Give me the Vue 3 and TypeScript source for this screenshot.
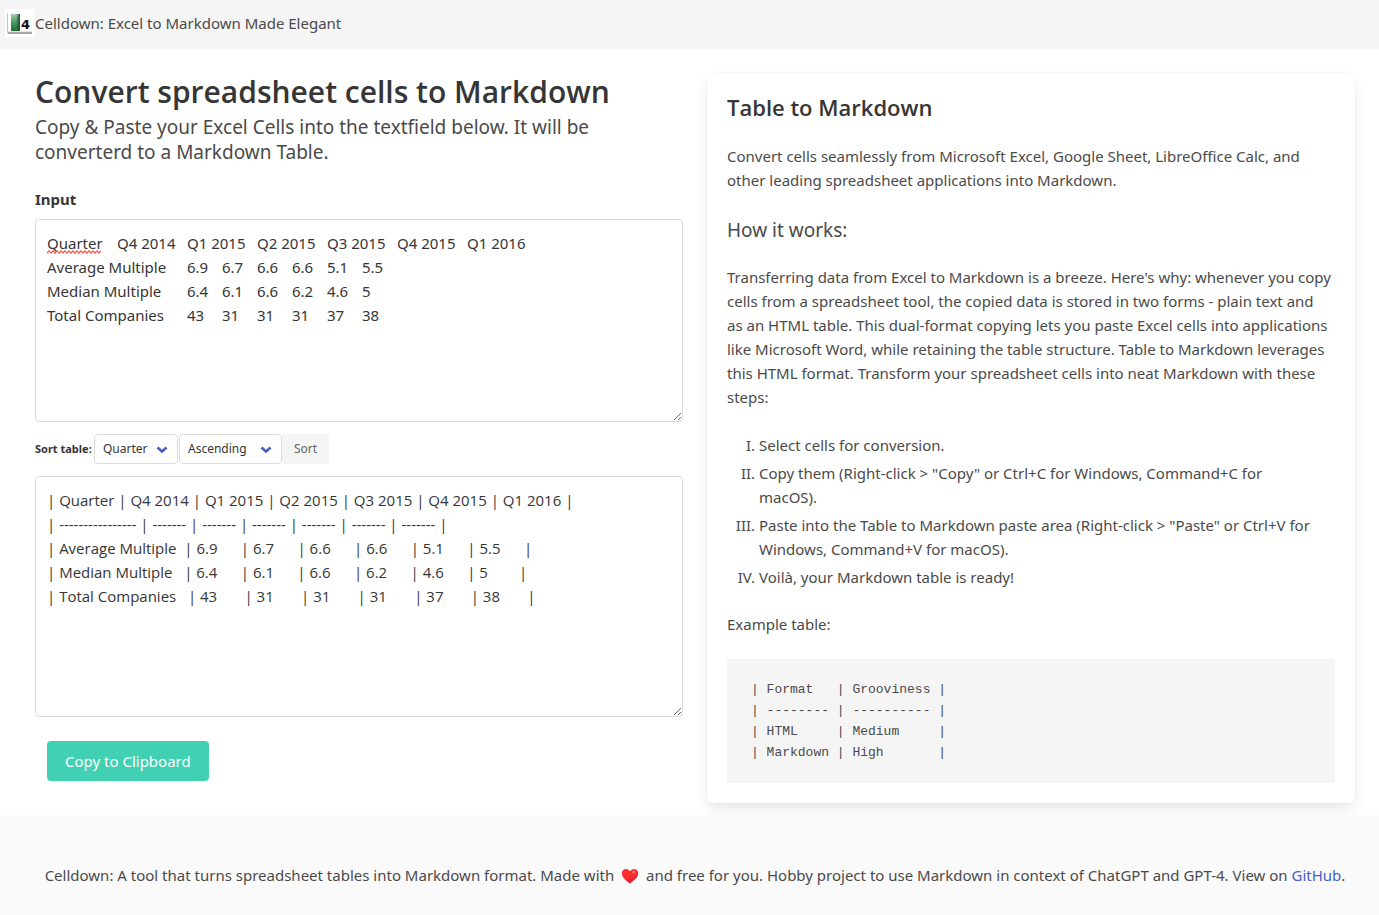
<script setup lang="ts">
import { ref } from 'vue'

const input = ref(
  [
    'Quarter\tQ4 2014\tQ1 2015\tQ2 2015\tQ3 2015\tQ4 2015\tQ1 2016',
    'Average Multiple\t6.9\t6.7\t6.6\t6.6\t5.1\t5.5',
    'Median Multiple\t6.4\t6.1\t6.6\t6.2\t4.6\t5',
    'Total Companies\t43\t31\t31\t31\t37\t38',
  ].join('\n'),
)

const output = ref(
  [
    '| Quarter | Q4 2014 | Q1 2015 | Q2 2015 | Q3 2015 | Q4 2015 | Q1 2016 |',
    '| ---------------- | ------- | ------- | ------- | ------- | ------- | ------- |',
    '| Average Multiple  | 6.9      | 6.7      | 6.6      | 6.6      | 5.1      | 5.5      |',
    '| Median Multiple   | 6.4      | 6.1      | 6.6      | 6.2      | 4.6      | 5        |',
    '| Total Companies   | 43       | 31       | 31       | 31       | 37       | 38       |',
  ].join('\n'),
)

const example = [
  '| Format   | Grooviness |',
  '| -------- | ---------- |',
  '| HTML     | Medium     |',
  '| Markdown | High       |',
].join('\n')

const columns = ['Quarter', 'Q4 2014', 'Q1 2015', 'Q2 2015', 'Q3 2015', 'Q4 2015', 'Q1 2016']
const sortColumn = ref('Quarter')
const sortOrder = ref('Ascending')

function copyOutput() {
  navigator.clipboard?.writeText(output.value)
}
</script>

<template>
  <div class="page">
    <header class="navbar">
      <svg class="logo" viewBox="0 0 30 28" aria-hidden="true">
        <defs>
          <linearGradient id="sheet" x1="0" x2="0" y1="0" y2="1">
            <stop offset="0" stop-color="#a3d0b0" />
            <stop offset="0.5" stop-color="#4c9a64" />
            <stop offset="1" stop-color="#1f6a34" />
          </linearGradient>
          <linearGradient id="edge" x1="0" x2="1">
            <stop offset="0" stop-color="#2a5636" stop-opacity="0" />
            <stop offset="1" stop-color="#16301d" />
          </linearGradient>
        </defs>
        <rect width="30" height="28" fill="#fff" />
        <rect x="2" y="4" width="1" height="20" fill="#c4c4c4" />
        <rect x="3" y="23" width="24" height="2" fill="#a9a9a9" />
        <rect x="3" y="22" width="24" height="1" fill="#e4e4e4" />
        <rect x="6" y="5" width="8" height="17" fill="url(#sheet)" />
        <rect x="11" y="5" width="4" height="17" fill="url(#edge)" />
        <text x="16" y="20" class="logo-text">4</text>
      </svg>
      <span>Celldown: Excel to Markdown Made Elegant</span>
    </header>

    <main class="columns">
      <section class="converter">
        <h1>Convert spreadsheet cells to Markdown</h1>
        <p class="subtitle">Copy &amp; Paste your Excel Cells into the textfield below. It will be converterd to a Markdown Table.</p>

        <label class="label" for="cells">Input</label>
        <div class="field">
          <textarea id="cells" v-model="input" class="textarea cells" spellcheck="false"></textarea>
          <svg class="squiggle" viewBox="0 0 54 4" aria-hidden="true">
            <path
              d="M0 3.2 2 .8 4 3.2 6 .8 8 3.2 10 .8 12 3.2 14 .8 16 3.2 18 .8 20 3.2 22 .8 24 3.2 26 .8 28 3.2 30 .8 32 3.2 34 .8 36 3.2 38 .8 40 3.2 42 .8 44 3.2 46 .8 48 3.2 50 .8 52 3.2 54 .8"
              fill="none"
              stroke="#f0524a"
              stroke-width="1.1"
            />
          </svg>
        </div>

        <div class="sort">
          <label class="sort-label" for="sort-column">Sort table:</label>
          <div class="select by-column">
            <select id="sort-column" v-model="sortColumn">
              <option v-for="c in columns" :key="c">{{ c }}</option>
            </select>
            <svg viewBox="0 0 12 8" aria-hidden="true"><path d="M1.500 1.500 6 5.500l4.500-4" /></svg>
          </div>
          <div class="select by-order">
            <select v-model="sortOrder" aria-label="Sort order">
              <option>Ascending</option>
              <option>Descending</option>
            </select>
            <svg viewBox="0 0 12 8" aria-hidden="true"><path d="M1.500 1.500 6 5.500l4.500-4" /></svg>
          </div>
          <button class="sort-button" type="button">Sort</button>
        </div>

        <textarea v-model="output" class="textarea markdown" aria-label="Markdown table" spellcheck="false"></textarea>

        <button class="copy" type="button" @click="copyOutput">Copy to Clipboard</button>
      </section>

      <article class="box">
        <h2>Table to Markdown</h2>
        <p>
          Convert cells seamlessly from Microsoft Excel, Google Sheet, LibreOffice Calc, and other leading spreadsheet
          applications into Markdown.
        </p>
        <h3>How it works:</h3>
        <p>
          Transferring data from Excel to Markdown is a breeze. Here's why: whenever you copy cells from a spreadsheet
          tool, the copied data is stored in two forms - plain text and as an HTML table. This dual-format copying lets
          you paste Excel cells into applications like Microsoft Word, while retaining the table structure. Table to
          Markdown leverages this HTML format. Transform your spreadsheet cells into neat Markdown with these steps:
        </p>
        <ol>
          <li>Select cells for conversion.</li>
          <li>Copy them (Right-click &gt; "Copy" or Ctrl+C for Windows, Command+C for macOS).</li>
          <li>Paste into the Table to Markdown paste area (Right-click &gt; "Paste" or Ctrl+V for Windows, Command+V for macOS).</li>
          <li>Voilà, your Markdown table is ready!</li>
        </ol>
        <p>Example table:</p>
        <pre>{{ example }}</pre>
      </article>
    </main>

    <footer class="footer">
      <p>
        Celldown: A tool that turns spreadsheet tables into Markdown format. Made with
        <svg class="heart" viewBox="0 0 18 16" role="img" aria-label="love">
          <path d="M9 15.4C5.600 12.800.800 9.400.800 5.200.800 2.600 2.700.900 5 .900c1.700 0 3.200.900 4 2.400.800-1.500 2.300-2.400 4-2.400 2.300 0 4.200 1.700 4.200 4.300 0 4.200-4.800 7.600-8.200 10.200z" fill="#f8312f" />
          <path d="M3.200 11.200C7 12.200 13 11 16.900 6.500c-.9 3.600-4.900 6.500-7.900 8.900-1.900-1.400-4.200-2.800-5.800-4.200z" fill="#ca0b4a" opacity=".45" />
          <ellipse cx="12.800" cy="3.900" rx="1.900" ry="1.200" fill="#f37366" transform="rotate(-30 12.800 3.900)" />
        </svg>
        and free for you. Hobby project to use Markdown in context of ChatGPT and GPT-4. View on
        <a href="#github">GitHub</a>.
      </p>
    </footer>
  </div>
</template>

<style>
body {
  background: #fff;
}
</style>

<style scoped>
.page {
  display: flex;
  flex-direction: column;
  min-height: 100vh;
  color: #4a4a4a;
  font-family: 'Noto Sans', 'Open Sans', sans-serif;
  font-size: 15px;
  line-height: 24px;
}

.page *,
.page {
  box-sizing: border-box;
}

h1,
h2,
h3,
p,
pre,
ol {
  margin: 0;
}

button,
select,
textarea {
  font: inherit;
}

.navbar {
  display: flex;
  align-items: center;
  height: 49px;
  padding: 0 5px 4px;
  background: #f5f5f5;
}

.logo {
  width: 30px;
  height: 28px;
}

.logo-text {
  font: bold 13px 'DejaVu Sans', sans-serif;
  fill: #111;
}

.columns {
  display: grid;
  grid-template-columns: 1fr 1fr;
  gap: 24px;
  padding: 24px 24px 12px 35px;
}

.converter {
  display: flex;
  flex-direction: column;
}

h1,
h2 {
  color: #363636;
  font-family: 'Open Sans', 'Noto Sans', sans-serif;
  font-weight: 600;
}

h1 {
  margin-bottom: 4px;
  font-size: 30px;
  line-height: 38px;
}

.subtitle {
  padding-right: 64px;
  font-size: 19px;
  line-height: 25px;
}

.label {
  margin: 22px 0 8px;
  color: #363636;
  font-weight: 700;
}

.field {
  position: relative;
  display: flex;
}

.textarea {
  display: block;
  width: 100%;
  margin: 0;
  padding: 11px;
  border: 1px solid #dbdbdb;
  border-radius: 4px;
  background: #fff;
  color: #363636;
  resize: vertical;
  tab-size: 35px;
  outline: none;
}

.cells {
  height: 203px;
}

.markdown {
  height: 241px;
  font-family: 'Open Sans', 'Noto Sans', sans-serif;
}

.squiggle {
  position: absolute;
  top: 31px;
  left: 12px;
  width: 54px;
  height: 4px;
}

.sort {
  display: flex;
  align-items: center;
  margin: 12px 0;
  font-size: 12px;
  color: #363636;
}

.sort-label {
  width: 59px;
  font-size: 11px;
  font-weight: 700;
  white-space: nowrap;
}

.select {
  position: relative;
  margin-right: 1px;
}

.select select {
  display: block;
  width: 100%;
  height: 30px;
  padding: 0 8px;
  border: 1px solid #dbdbdb;
  border-radius: 4px;
  background: #fff;
  color: #363636;
  appearance: none;
}

.by-column {
  width: 84px;
}

.by-order {
  width: 103px;
  margin-right: 0;
}

.select svg {
  position: absolute;
  top: 12px;
  right: 10px;
  width: 12px;
  height: 8px;
  fill: none;
  stroke: #485fc7;
  stroke-width: 2.6;
  pointer-events: none;
}

.sort-button {
  height: 30px;
  padding: 0 12px;
  border: 0;
  border-radius: 2px;
  background: #f5f5f5;
  color: #666;
}

.copy {
  align-self: flex-start;
  height: 40px;
  margin: 24px 12px 0;
  padding: 0 18px;
  border: 0;
  border-radius: 4px;
  background: #41d0b2;
  color: #fff;
}

.box {
  padding: 20px;
  border-radius: 6px;
  background: #fff;
  box-shadow:
    0 8px 16px -2px rgba(10, 10, 10, 0.1),
    0 0 0 1px rgba(10, 10, 10, 0.02);
}

.box p {
  padding-right: 4px;
}

h2 {
  margin-bottom: 23px;
  font-size: 22px;
  line-height: 28px;
}

h3 {
  margin: 26px 0 22px;
  font-size: 19px;
  font-weight: 400;
  line-height: 25px;
}

ol {
  margin: 24px 0 23px 32px;
  padding: 0 14px 0 0;
  list-style: upper-roman;
}

li + li {
  margin-top: 4px;
}

pre {
  margin-top: 23px;
  padding: 20px 24px;
  background: #f5f5f5;
  font-family: 'Liberation Mono', monospace;
  font-size: 13px;
  line-height: 21px;
  overflow-x: auto;
}

.footer {
  flex: 1;
  padding: 48px 24px 27px 35px;
  background: #fafafa;
  text-align: center;
}

.heart {
  width: 18px;
  height: 16px;
  margin: 0 3px;
  vertical-align: -3px;
}

a {
  color: #485fc7;
  text-decoration: none;
}
</style>
